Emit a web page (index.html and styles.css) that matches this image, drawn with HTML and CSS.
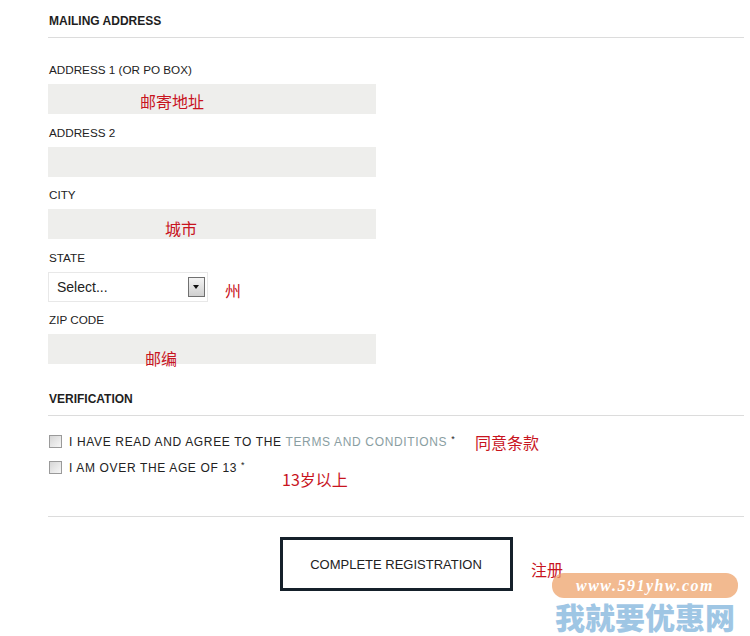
FILE: index.html
```html
<!DOCTYPE html>
<html lang="en">

<head>
  <meta charset="UTF-8" />
  <meta name="viewport" content="width=device-width, initial-scale=1.0" />
  <title>Registration - Mailing Address</title>
  <link rel="stylesheet" href="styles.css">
</head>

<body>
  <div id="page">
    <form class="form">
      <h3 class="section-title">MAILING ADDRESS</h3>

      <div class="fields">
        <div class="field">
          <label>ADDRESS 1 (OR PO BOX)</label>
          <div class="control">
            <input type="text" />
            <span class="note note-address">邮寄地址</span>
          </div>
        </div>
        <div class="field">
          <label>ADDRESS 2</label>
          <div class="control">
            <input type="text" />
          </div>
        </div>
        <div class="field">
          <label>CITY</label>
          <div class="control">
            <input type="text" />
            <span class="note note-city">城市</span>
          </div>
        </div>
        <div class="field">
          <label>STATE</label>
          <div class="control select-wrap">
            <select>
              <option>Select...</option>
            </select>
            <span class="select-arrow"></span>
            <span class="note note-state">州</span>
          </div>
        </div>
        <div class="field">
          <label>ZIP CODE</label>
          <div class="control">
            <input type="text" />
            <span class="note note-zip">邮编</span>
          </div>
        </div>
      </div>

      <h3 class="section-title">VERIFICATION</h3>

      <div class="checks">
        <label class="check">
          <input type="checkbox" />
          <span>I HAVE READ AND AGREE TO THE <a href="#">TERMS AND CONDITIONS</a> <sup>*</sup></span>
          <span class="note note-terms">同意条款</span>
        </label>
        <label class="check">
          <input type="checkbox" />
          <span>I AM OVER THE AGE OF 13 <sup>*</sup></span>
          <span class="note note-age">13岁以上</span>
        </label>
      </div>

      <div class="actions">
        <button type="button">COMPLETE REGISTRATION</button>
        <span class="note note-submit">注册</span>
      </div>
    </form>

    <!-- watermark -->
    <div class="watermark">
      <div class="wm-url">www.591yhw.com</div>
      <div class="wm-name">我就要优惠网</div>
    </div>
  </div>
</body>

</html>
```

FILE: styles.css
```css
body {
  margin: 0;
  background-color: #fff;
  font-family: "Liberation Sans", Arial, sans-serif;
  color: #222;
}

#page {
  position: relative;
  height: 636px;
  overflow: hidden;
}

.form {
  width: 696px;
  margin-left: 48px;
}

.section-title {
  margin: 0;
  padding: 14px 0 9px 1px;
  font-size: 12px;
  line-height: 14px;
  font-weight: bold;
  color: #1e1e1e;
  border-bottom: 1px solid #dcdcdc;
}

.fields {
  padding-top: 25px;
}

.field {
  margin-bottom: 11.5px;
}

.field:last-child {
  margin-bottom: 14px;
}

.field label {
  display: block;
  padding-left: 1px;
  font-size: 11.7px;
  line-height: 14px;
  color: #222;
  margin-bottom: 7px;
}

.control {
  position: relative;
  width: 328px;
}

.control input {
  display: block;
  box-sizing: border-box;
  width: 328px;
  height: 30px;
  border: none;
  background-color: #eeeeec;
}

.select-wrap {
  width: 160px;
}

.select-wrap select {
  display: block;
  box-sizing: border-box;
  width: 160px;
  height: 30px;
  padding: 0 0 0 8px;
  border: 1px solid #e8e8e8;
  background-color: #fff;
  font-family: "Liberation Sans", Arial, sans-serif;
  font-size: 14px;
  color: #222;
  appearance: none;
  -webkit-appearance: none;
}

.select-arrow {
  position: absolute;
  left: 140px;
  top: 5px;
  width: 15px;
  height: 18px;
  border: 1px solid #707070;
  background: linear-gradient(#f4f4f4, #cfcfcf);
  pointer-events: none;
}

.select-arrow::after {
  content: "";
  position: absolute;
  left: 4px;
  top: 7px;
  border-left: 3.5px solid transparent;
  border-right: 3.5px solid transparent;
  border-top: 4px solid #111;
}

.note {
  position: absolute;
  font-family: "Noto Sans CJK SC", sans-serif;
  font-size: 16px;
  line-height: 20px;
  color: #c8141e;
  white-space: nowrap;
}

.note-address {
  left: 92px;
  top: 7px;
}

.note-city {
  left: 117px;
  top: 9px;
}

.note-state {
  left: 177px;
  top: 8px;
}

.note-zip {
  left: 97px;
  top: 14px;
}

.checks {
  padding-top: 15px;
  padding-bottom: 39px;
  border-bottom: 1px solid #dcdcdc;
}

.check {
  position: relative;
  display: flex;
  align-items: center;
  gap: 7px;
  height: 20px;
  margin-bottom: 6px;
  font-size: 12px;
  letter-spacing: 0.65px;
  color: #222;
}

.check:last-child {
  margin-bottom: 0;
}

.check input {
  appearance: none;
  -webkit-appearance: none;
  box-sizing: border-box;
  width: 13px;
  height: 13px;
  margin: 0 0 0 1px;
  border: 1px solid #9a9a9a;
  background: linear-gradient(135deg, #d6d6d6, #f6f6f6);
}

.check a {
  color: #8a9ea2;
  text-decoration: none;
}

.check sup {
  font-size: 9px;
  vertical-align: 4px;
  letter-spacing: 0;
}

.note-terms {
  left: 427px;
  top: 1px;
  letter-spacing: 0;
}

.note-age {
  left: 234px;
  top: 12px;
  letter-spacing: 0;
}

.actions {
  position: relative;
  display: flex;
  justify-content: center;
  padding-top: 20px;
}

.actions button {
  width: 233px;
  height: 54px;
  border: 3px solid #15202a;
  background-color: #fff;
  font-family: "Liberation Sans", Arial, sans-serif;
  font-size: 13px;
  color: #222;
}

.note-submit {
  left: 483px;
  top: 42px;
}

.watermark {
  position: absolute;
  left: 549px;
  top: 573px;
  width: 192px;
  opacity: 0.75;
}

.wm-url {
  margin: 0 3px;
  height: 25px;
  line-height: 25px;
  border-radius: 12px;
  background-color: #eea36c;
  color: #fff;
  font-family: "Liberation Serif", serif;
  font-style: italic;
  font-weight: bold;
  font-size: 16px;
  letter-spacing: 1.5px;
  text-align: center;
}

.wm-name {
  margin-top: 1px;
  font-family: "Noto Sans CJK SC", sans-serif;
  font-weight: 900;
  font-size: 30px;
  line-height: 34px;
  color: #7fb4dc;
  text-align: center;
}
```
